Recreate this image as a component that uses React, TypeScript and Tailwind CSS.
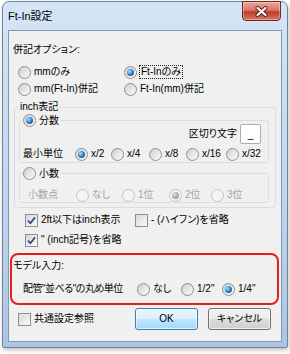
function Radio({ on, disabled }: { on?: boolean; disabled?: boolean }) {
  return (
    <span
      className={`flex h-[13px] w-[13px] shrink-0 items-center justify-center rounded-full border ${
        disabled
          ? "border-[#c4c4c4] bg-[#f4f4f4]"
          : "border-[#8e8f8f] bg-gradient-to-br from-[#d0d0d0] to-[#fbfbfb]"
      }`}
    >
      {on && (
        <span
          className={`h-[7px] w-[7px] rounded-full ${
            disabled
              ? "bg-[radial-gradient(circle_at_35%_35%,#e0e0e0,#9a9a9a_70%)]"
              : "bg-[radial-gradient(circle_at_35%_35%,#a8dcff,#2478c4_55%,#0c3f7a)]"
          }`}
        />
      )}
    </span>
  );
}

function Check({ on }: { on?: boolean }) {
  return (
    <span className="flex h-[13px] w-[13px] shrink-0 items-center justify-center border border-[#8e8f8f] bg-gradient-to-br from-[#d8d8d8] to-[#fafafa]">
      {on && (
        <svg width="9" height="9" viewBox="0 0 9 9">
          <path d="M1 4.6 L3.4 7.2 L8 1.4" fill="none" stroke="#2c4b8a" strokeWidth="1.7" />
        </svg>
      )}
    </span>
  );
}

function Opt({
  on,
  disabled,
  label,
  w,
}: {
  on?: boolean;
  disabled?: boolean;
  label: string;
  w?: string;
}) {
  return (
    <div className={`flex shrink-0 items-center gap-[3px] whitespace-nowrap ${w ?? ""}`}>
      <Radio on={on} disabled={disabled} />
      <span className={disabled ? "text-[#a3a3a3]" : ""}>{label}</span>
    </div>
  );
}

export default function App() {
  return (
    <div className="h-[354px] w-[290px] bg-white pl-[2px] pt-[1px] font-['Liberation_Sans','Noto_Sans_CJK_JP',sans-serif] text-[10px] leading-none text-black [font-feature-settings:'palt']">
      <div className="flex h-[347px] w-[286px] flex-col rounded-t-[7px] rounded-b-[2px] border border-[#71849b] bg-gradient-to-b from-[#d4e5f6] via-[#c3d8ee] to-[#abc5e2] px-[5px] pb-[5px] shadow-[1px_2px_4px_rgba(0,0,0,0.25)]">
        {/* title bar */}
        <div className="flex h-[28px] shrink-0 items-start justify-between">
          <span className="mt-[9px] text-[11px]">Ft-In設定</span>
          <div className="-mt-[1px] mr-[1px] flex h-[20px] w-[39px] items-center justify-center rounded-b-[4px] border border-[#6e2a22] bg-[linear-gradient(#eaa898,#d9786a_45%,#c2392b_55%,#d27a66)] shadow-[inset_0_0_0_1px_rgba(255,255,255,0.35)]">
            <svg width="13" height="11" viewBox="0 0 13 11">
              <path d="M2.5 2 L10.5 9 M10.5 2 L2.5 9" stroke="#5a1d16" strokeWidth="4" strokeLinecap="round" />
              <path d="M2.5 2 L10.5 9 M10.5 2 L2.5 9" stroke="#ffffff" strokeWidth="2.2" strokeLinecap="round" />
            </svg>
          </div>
        </div>

        {/* client area */}
        <div className="flex flex-1 flex-col border border-[#8399b3] bg-[#f0f0f0]">
          <div className="mt-[11px] flex h-[16px] items-center pl-[4px]">併記オプション:</div>

          <div className="mt-[6px] flex h-[16px] items-center pl-[9px]">
            <Opt label="mmのみ" w="w-[106px]" />
            <div className="flex items-center gap-[2px]">
              <Radio on />
              <span className="border border-dotted border-[#222] px-[1px] py-[1px]">Ft-Inのみ</span>
            </div>
          </div>
          <div className="mt-[1px] flex h-[16px] items-center pl-[9px]">
            <Opt label="mm(Ft-In)併記" w="w-[106px]" />
            <Opt label="Ft-In(mm)併記" />
          </div>

          {/* inch group */}
          <fieldset className="mt-[3px] ml-[5px] w-[262px] rounded-[3px] border border-[#d5dfe5] pb-[4px]">
            <legend className="ml-[4px] h-[14px] px-[1px] leading-[14px]">inch表記</legend>
            <div className="flex flex-col">
              <fieldset className="mr-[6px] ml-[4px] rounded-[3px] border border-[#d5dfe5]">
                <legend className="ml-[2px] px-[1px]">
                  <Opt on label="分数" />
                </legend>
                <div className="flex flex-col">
                  <div className="-mt-[3px] flex h-[20px] items-center justify-end gap-[3px] pr-[7px]">
                    <span>区切り文字</span>
                    <div className="flex h-[20px] w-[21px] items-end justify-center rounded-[2px] border border-[#abadb3] bg-white pb-[3px]">
                      _
                    </div>
                  </div>
                  <div className="mt-[2px] flex h-[16px] items-center pl-[3px]">
                    <span className="w-[52px] shrink-0">最小単位</span>
                    <Opt on label="x/2" w="w-[36px]" />
                    <Opt label="x/4" w="w-[38px]" />
                    <Opt label="x/8" w="w-[37px]" />
                    <Opt label="x/16" w="w-[40px]" />
                    <Opt label="x/32" />
                  </div>
                </div>
              </fieldset>

              <fieldset className="mt-[4px] mr-[6px] ml-[4px] rounded-[3px] border border-[#d5dfe5]">
                <legend className="ml-[2px] px-[1px]">
                  <Opt label="小数" />
                </legend>
                <div className="mt-[8px] flex h-[14px] items-center pl-[8px]">
                  <span className="w-[48px] shrink-0 text-[#a3a3a3]">小数点</span>
                  <Opt disabled label="なし" w="w-[46px]" />
                  <Opt disabled label="1位" w="w-[47px]" />
                  <Opt disabled on label="2位" w="w-[42px]" />
                  <Opt disabled label="3位" />
                </div>
              </fieldset>
            </div>
          </fieldset>

          <div className="mt-[4px] flex h-[16px] items-center pl-[16px]">
            <div className="flex w-[110px] shrink-0 items-center gap-[3px]">
              <Check on />
              <span>2ft以下はinch表示</span>
            </div>
            <div className="flex items-center gap-[3px]">
              <Check />
              <span>- (ハイフン)を省略</span>
            </div>
          </div>
          <div className="mt-[4px] flex h-[16px] items-center gap-[3px] pl-[16px]">
            <Check on />
            <span>{'" (inch記号)を省略'}</span>
          </div>

          {/* model input */}
          <div className="mt-[5px] ml-[1px] flex w-[269px] flex-col rounded-[8px] border-2 border-[#e3211c] pt-[3px] pb-[6px]">
            <div className="flex h-[16px] items-center pl-[1px]">モデル入力:</div>
            <div className="mt-[7px] flex h-[16px] items-center pl-[11px]">
              <span className="w-[114px] shrink-0 whitespace-nowrap tracking-[-0.5px]">{'配管"並べる"の丸め単位'}</span>
              <Opt label="なし" w="w-[44px]" />
              <Opt label={'1/2"'} w="w-[41px]" />
              <Opt on label={'1/4"'} />
            </div>
          </div>

          <div className="mt-[3px] flex h-[22px] items-center pl-[9px]">
            <div className="flex w-[117px] shrink-0 items-center gap-[3px]">
              <Check />
              <span>共通設定参照</span>
            </div>
            <button className="flex h-[22px] w-[63px] items-center justify-center rounded-[3px] border border-[#3c7fb1] bg-[linear-gradient(#eaf6fd,#d9f0fc_50%,#bee6fd_50%,#a7d9f5)] shadow-[inset_0_0_0_1px_rgba(255,255,255,0.6)]">
              OK
            </button>
            <button className="ml-[10px] flex h-[22px] w-[63px] items-center justify-center rounded-[3px] border border-[#707070] bg-[linear-gradient(#f2f2f2,#ebebeb_50%,#dddddd_50%,#cfcfcf)] shadow-[inset_0_0_0_1px_rgba(255,255,255,0.6)]">
              キャンセル
            </button>
          </div>
        </div>
      </div>
    </div>
  );
}
